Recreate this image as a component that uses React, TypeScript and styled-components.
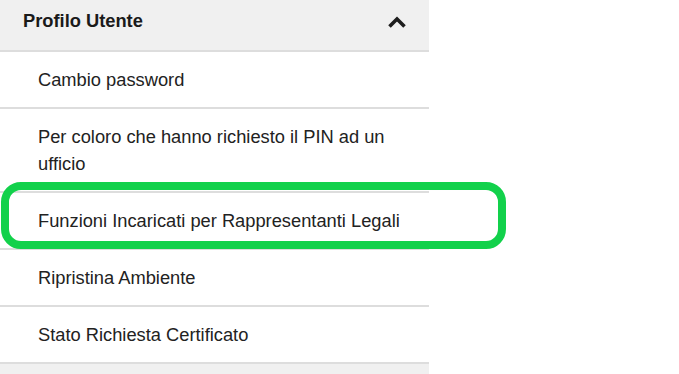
import React from "react";
import styled, { createGlobalStyle } from "styled-components";

const Global = createGlobalStyle`
  html, body { margin: 0; padding: 0; background: #ffffff; }
  body { font-family: "Liberation Sans", Arial, sans-serif; }
`;

const Page = styled.div`
  position: relative;
  width: 679px;
  height: 374px;
  overflow: hidden;
  background: #ffffff;
`;

const Panel = styled.div`
  width: 429px;
  display: flex;
  flex-direction: column;
`;

const Header = styled.div`
  display: flex;
  align-items: flex-start;
  justify-content: space-between;
  height: 26px;
  padding: 8px 22px 16px 23px;
  background: #f0f0f0;
  border-bottom: 2px solid #dddddd;
  font-size: 18.3px;
  line-height: 26px;
  font-weight: 700;
  color: #1a1a1a;
`;

const Chevron = styled.svg`
  width: 20px;
  height: 14px;
  margin-top: 7px;
  display: block;
  flex-shrink: 0;
`;

const Item = styled.div`
  padding: 14px 24px 14px 38px;
  font-size: 18.3px;
  line-height: 27px;
  color: #222222;
  border-bottom: 2px solid #dddddd;
`;

const NextHeader = styled.div`
  height: 40px;
  background: #f0f0f0;
`;

const Highlight = styled.div`
  position: absolute;
  left: 1px;
  top: 182px;
  width: 489px;
  height: 51px;
  border: 8px solid #12d14b;
  border-radius: 20px;
  pointer-events: none;
`;

const items = [
  "Cambio password",
  "Per coloro che hanno richiesto il PIN ad un ufficio",
  "Funzioni Incaricati per Rappresentanti Legali",
  "Ripristina Ambiente",
  "Stato Richiesta Certificato",
];

export default function App() {
  return (
    <Page>
      <Global />
      <Panel>
        <Header>
          <span>Profilo Utente</span>
          <Chevron viewBox="0 0 20 14">
            <polyline
              points="2.5,11.5 10,4 17.5,11.5"
              fill="none"
              stroke="#1e1e1e"
              strokeWidth="3.6"
              strokeLinecap="butt"
              strokeLinejoin="miter"
            />
          </Chevron>
        </Header>
        {items.map((t) => (
          <Item key={t}>{t}</Item>
        ))}
        <NextHeader />
      </Panel>
      <Highlight />
    </Page>
  );
}
